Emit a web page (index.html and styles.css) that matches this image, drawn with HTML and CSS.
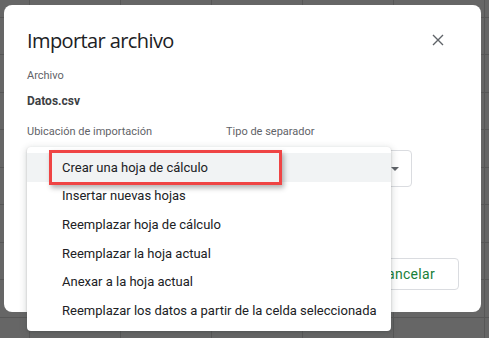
FILE: index.html
```html
<!DOCTYPE html>
<html lang="es">
<head>
<meta charset="utf-8">
<title>Importar archivo</title>
<link rel="stylesheet" href="styles.css">
</head>
<body>
<div class="dialog">
  <div class="header">
    <h1 class="title">Importar archivo</h1>
    <button class="close" aria-label="Cerrar">
      <svg width="12" height="12" viewBox="0 0 12 12"><path d="M1 1L11 11M11 1L1 11" stroke="#5f6368" stroke-width="1.4" fill="none"/></svg>
    </button>
  </div>
  <div class="field">
    <div class="label">Archivo</div>
    <div class="filename">Datos.csv</div>
  </div>
  <div class="row">
    <div class="col">
      <div class="label">Ubicación de importación</div>
      <div class="select"></div>
    </div>
    <div class="col">
      <div class="label">Tipo de separador</div>
      <div class="select"><span class="arrow"></span></div>
    </div>
  </div>
  <div class="actions">
    <button class="btn">Cancelar</button>
  </div>
  <div class="menu">
    <div class="item active">Crear una hoja de cálculo</div>
    <div class="item">Insertar nuevas hojas</div>
    <div class="item">Reemplazar hoja de cálculo</div>
    <div class="item">Reemplazar la hoja actual</div>
    <div class="item">Anexar a la hoja actual</div>
    <div class="item">Reemplazar los datos a partir de la celda seleccionada</div>
    <div class="highlight"></div>
  </div>
</div>
</body>
</html>
```

FILE: styles.css
```css
* { box-sizing: border-box; }
html, body { height: 100%; }
body {
  margin: 0;
  padding: 5px 8px 0 4px;
  background-color: #666666;
  background-image:
    repeating-linear-gradient(to right, transparent 0 29px, #575757 29px 30px, transparent 30px 91px),
    repeating-linear-gradient(to bottom, transparent 0 17px, #575757 17px 18px, transparent 18px 37.5px);
  background-position: 0 0, 0 0;
  font-family: Roboto, "Liberation Sans", Arial, sans-serif;
  overflow: hidden;
}
.dialog {
  position: relative;
  width: 477px;
  height: 307px;
  background: #fff;
  border-radius: 8px;
  padding: 24px 22px 22px 23px;
  display: flex;
  flex-direction: column;
}
.header {
  display: flex;
  align-items: flex-start;
  justify-content: space-between;
}
.title {
  margin: 0;
  font-family: "Open Sans", Roboto, sans-serif;
  font-weight: 400;
  font-size: 20px;
  line-height: 24px;
  color: #202124;
  letter-spacing: -0.6px;
}
.close {
  border: 0;
  background: none;
  padding: 0;
  margin: 5px 15px 0 0;
  width: 12px;
  height: 12px;
  display: block;
}
.close svg { display: block; }
.field { margin-top: 15px; }
.label {
  font-size: 11px;
  line-height: 16px;
  color: #5f6368;
}
.filename {
  margin-top: 9px;
  font-size: 12px;
  line-height: 16px;
  font-weight: 700;
  color: #3c4043;
}
.row {
  display: flex;
  gap: 13px;
  margin-top: 15px;
}
.col { width: 186px; }
.select {
  position: relative;
  margin-top: 10px;
  height: 37px;
  border: 1px solid #dadce0;
  border-radius: 4px;
}
.arrow {
  position: absolute;
  right: 12px;
  top: 16px;
  width: 0;
  height: 0;
  border-left: 4px solid transparent;
  border-right: 4px solid transparent;
  border-top: 4px solid #5f6368;
}
.actions {
  margin-top: auto;
  display: flex;
  justify-content: flex-end;
}
.btn {
  height: 32px;
  padding: 0 23px;
  border: 1px solid #dadce0;
  border-radius: 4px;
  background: #fff;
  color: #188038;
  font-family: Roboto, sans-serif;
  font-size: 14px;
  font-weight: 400;
  letter-spacing: 0.3px;
}
.menu {
  position: absolute;
  left: 23px;
  top: 142px;
  width: 364px;
  padding: 6px 0;
  background: #fff;
  border-radius: 4px;
  box-shadow: 0 2px 6px 2px rgba(60,64,67,.15), 0 1px 2px rgba(60,64,67,.3);
}
.item {
  height: 28.6px;
  display: flex;
  align-items: center;
  padding-left: 35px;
  font-size: 13px;
  color: #202124;
  white-space: nowrap;
}
.item.active { background: #f1f3f4; }
.highlight {
  position: absolute;
  left: 22px;
  top: 3px;
  width: 233px;
  height: 35px;
  border: 3px solid #ef4444;
  box-shadow: 2px 3px 5px rgba(0,0,0,.3);
}
```
